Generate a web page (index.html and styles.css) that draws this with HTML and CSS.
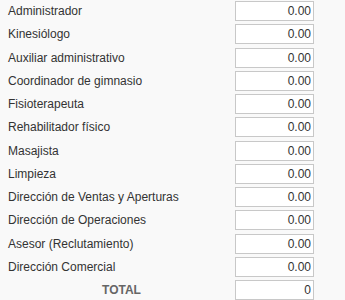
FILE: index.html
```html
<!DOCTYPE html>
<html lang="es">
<head>
  <meta charset="UTF-8">
  <meta name="viewport" content="width=device-width, initial-scale=1.0">
  <title>Presupuesto por puesto</title>
  <link rel="stylesheet" href="styles.css">
</head>
<body>
  <div class="budget">
    <label class="budget-label">Administrador</label>
    <input class="budget-input" type="text" value="0.00">
    <label class="budget-label">Kinesiólogo</label>
    <input class="budget-input" type="text" value="0.00">
    <label class="budget-label">Auxiliar administrativo</label>
    <input class="budget-input" type="text" value="0.00">
    <label class="budget-label">Coordinador de gimnasio</label>
    <input class="budget-input" type="text" value="0.00">
    <label class="budget-label">Fisioterapeuta</label>
    <input class="budget-input" type="text" value="0.00">
    <label class="budget-label">Rehabilitador físico</label>
    <input class="budget-input" type="text" value="0.00">
    <label class="budget-label">Masajista</label>
    <input class="budget-input" type="text" value="0.00">
    <label class="budget-label">Limpieza</label>
    <input class="budget-input" type="text" value="0.00">
    <label class="budget-label">Dirección de Ventas y Aperturas</label>
    <input class="budget-input" type="text" value="0.00">
    <label class="budget-label">Dirección de Operaciones</label>
    <input class="budget-input" type="text" value="0.00">
    <label class="budget-label">Asesor (Reclutamiento)</label>
    <input class="budget-input" type="text" value="0.00">
    <label class="budget-label">Dirección Comercial</label>
    <input class="budget-input" type="text" value="0.00">
    <label class="budget-label total">TOTAL</label>
    <input class="budget-input" type="text" value="0" readonly>
  </div>
</body>
</html>
```

FILE: styles.css
```css
body, html {
  margin: 0;
  padding: 0;
}
body {
  font-family: "Liberation Sans", Arial, sans-serif;
  font-size: 12px;
  color: #333;
  background-color: #f9f9f9;
  padding-top: 1px;
}
.budget {
  width: 314px;
  display: grid;
  grid-template-columns: 1fr 79px;
  grid-auto-rows: 20px;
  row-gap: 3.25px;
  align-items: center;
}
.budget-label {
  padding-left: 8px;
}
.budget-label.total {
  text-align: center;
  font-weight: bold;
  color: #666;
}
.budget-input {
  box-sizing: border-box;
  width: 79px;
  height: 20px;
  margin: 0;
  padding: 0 2px;
  border: 1px solid #c8c8c8;
  background: #fff;
  font-family: inherit;
  font-size: 12px;
  color: #333;
  text-align: right;
  outline: none;
}
```
